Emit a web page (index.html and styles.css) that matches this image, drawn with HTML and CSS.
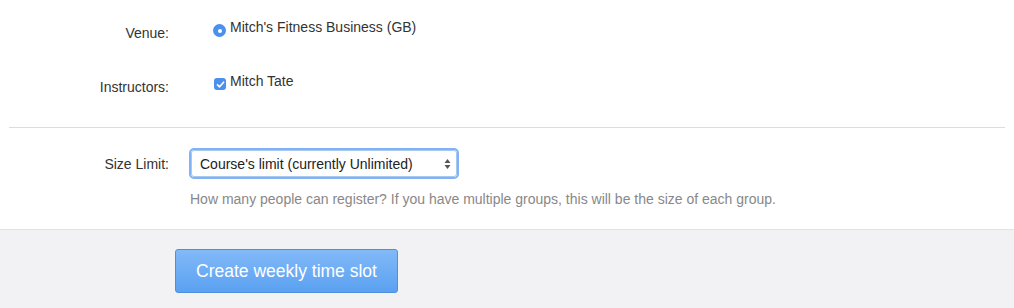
FILE: index.html
```html
<!DOCTYPE html>
<html lang="en">
  <head>
    <meta charset="UTF-8" />
    <title>Weekly time slot</title>
    <link rel="stylesheet" href="styles.css">
  </head>
  <body>
    <form class="slot-form">
      <div class="fields">
        <div class="row row-venue">
          <label class="row-label">Venue:</label>
          <div class="row-control">
            <label class="option">
              <span class="radio"><span class="radio-dot"></span></span>
              Mitch's Fitness Business (GB)
            </label>
          </div>
        </div>

        <div class="row row-instructors">
          <label class="row-label">Instructors:</label>
          <div class="row-control">
            <label class="option">
              <span class="checkbox">
                <svg width="9" height="9" viewBox="0 0 9 9">
                  <path d="M1.5 4.8 L3.6 6.8 L7.6 2.2" fill="none" stroke="#fff" stroke-width="1.6" stroke-linecap="round" stroke-linejoin="round"/>
                </svg>
              </span>
              Mitch Tate
            </label>
          </div>
        </div>
      </div>

      <hr class="divider">

      <div class="row row-size">
        <label class="row-label">Size Limit:</label>
        <div class="row-control">
          <div class="select">
            <span>Course's limit (currently Unlimited)</span>
            <svg class="select-arrows" width="7" height="12" viewBox="0 0 7 12">
              <path d="M3.5 1 L6.5 5 L0.5 5 Z" fill="#555"/>
              <path d="M3.5 11 L6.5 7 L0.5 7 Z" fill="#555"/>
            </svg>
          </div>
          <p class="help">How many people can register? If you have multiple groups, this will be the size of each group.</p>
        </div>
      </div>

      <div class="actions">
        <button type="button" class="button-primary">Create weekly time slot</button>
      </div>
    </form>
  </body>
</html>
```

FILE: styles.css
```css
body {
  margin: 0;
  font-family: 'Liberation Sans', Arial, sans-serif;
  font-size: 14px;
  color: #333;
  background: #fff;
}

.slot-form {
  height: 308px;
  display: flex;
  flex-direction: column;
}

.fields {
  padding-top: 18px;
}

.row {
  display: flex;
  align-items: flex-start;
}

.row-label {
  width: 169px;
  text-align: right;
  padding-right: 44px;
  box-sizing: content-box;
  flex-shrink: 0;
}

.row-venue .row-label {
  padding-top: 7px;
}

.row-instructors {
  margin-top: 31px;
}

.row-instructors .row-label {
  padding-top: 7px;
}

.row-control {
  display: flex;
  flex-direction: column;
}

.option {
  display: flex;
  align-items: flex-start;
  gap: 4px;
  line-height: 18px;
}

.radio {
  width: 13px;
  height: 13px;
  margin-top: 6px;
  border-radius: 50%;
  background: #4a90ef;
  display: flex;
  align-items: center;
  justify-content: center;
}

.radio-dot {
  width: 4px;
  height: 4px;
  border-radius: 50%;
  background: #fff;
}

.checkbox {
  width: 12px;
  height: 12px;
  margin-top: 6px;
  margin-left: 1px;
  border-radius: 3px;
  background: #4a90ef;
  display: flex;
  align-items: center;
  justify-content: center;
}

.divider {
  margin: 32px 9px 0;
  border: none;
  border-top: 1px solid #dcdcdc;
  height: 0;
}

.row-size {
  margin-top: 21px;
}

.row-size .row-label {
  width: 169px;
  padding-right: 21px;
  padding-top: 7px;
}

.select {
  width: 266px;
  height: 27px;
  box-sizing: border-box;
  border: 1px solid #a9c7ef;
  border-radius: 3px;
  box-shadow: 0 0 0 2px #7fb2f6;
  display: flex;
  align-items: center;
  justify-content: space-between;
  padding: 0 5px 0 8px;
  margin: 1px 0 0 1px;
  color: #222;
}

.help {
  margin: 14px 0 0;
  font-size: 14px;
  color: #888;
}

.actions {
  margin-top: 22px;
  flex: 1;
  background: #f2f2f4;
  border-top: 1px solid #e2e2e4;
  padding: 19px 0 0 175px;
}

.button-primary {
  width: 223px;
  height: 44px;
  border: 1px solid #4f8fdc;
  border-radius: 3px;
  background: linear-gradient(#82b9f8, #5aa1f1);
  color: #fff;
  font-family: 'Liberation Sans', Arial, sans-serif;
  font-size: 17.5px;
  cursor: pointer;
}
```
